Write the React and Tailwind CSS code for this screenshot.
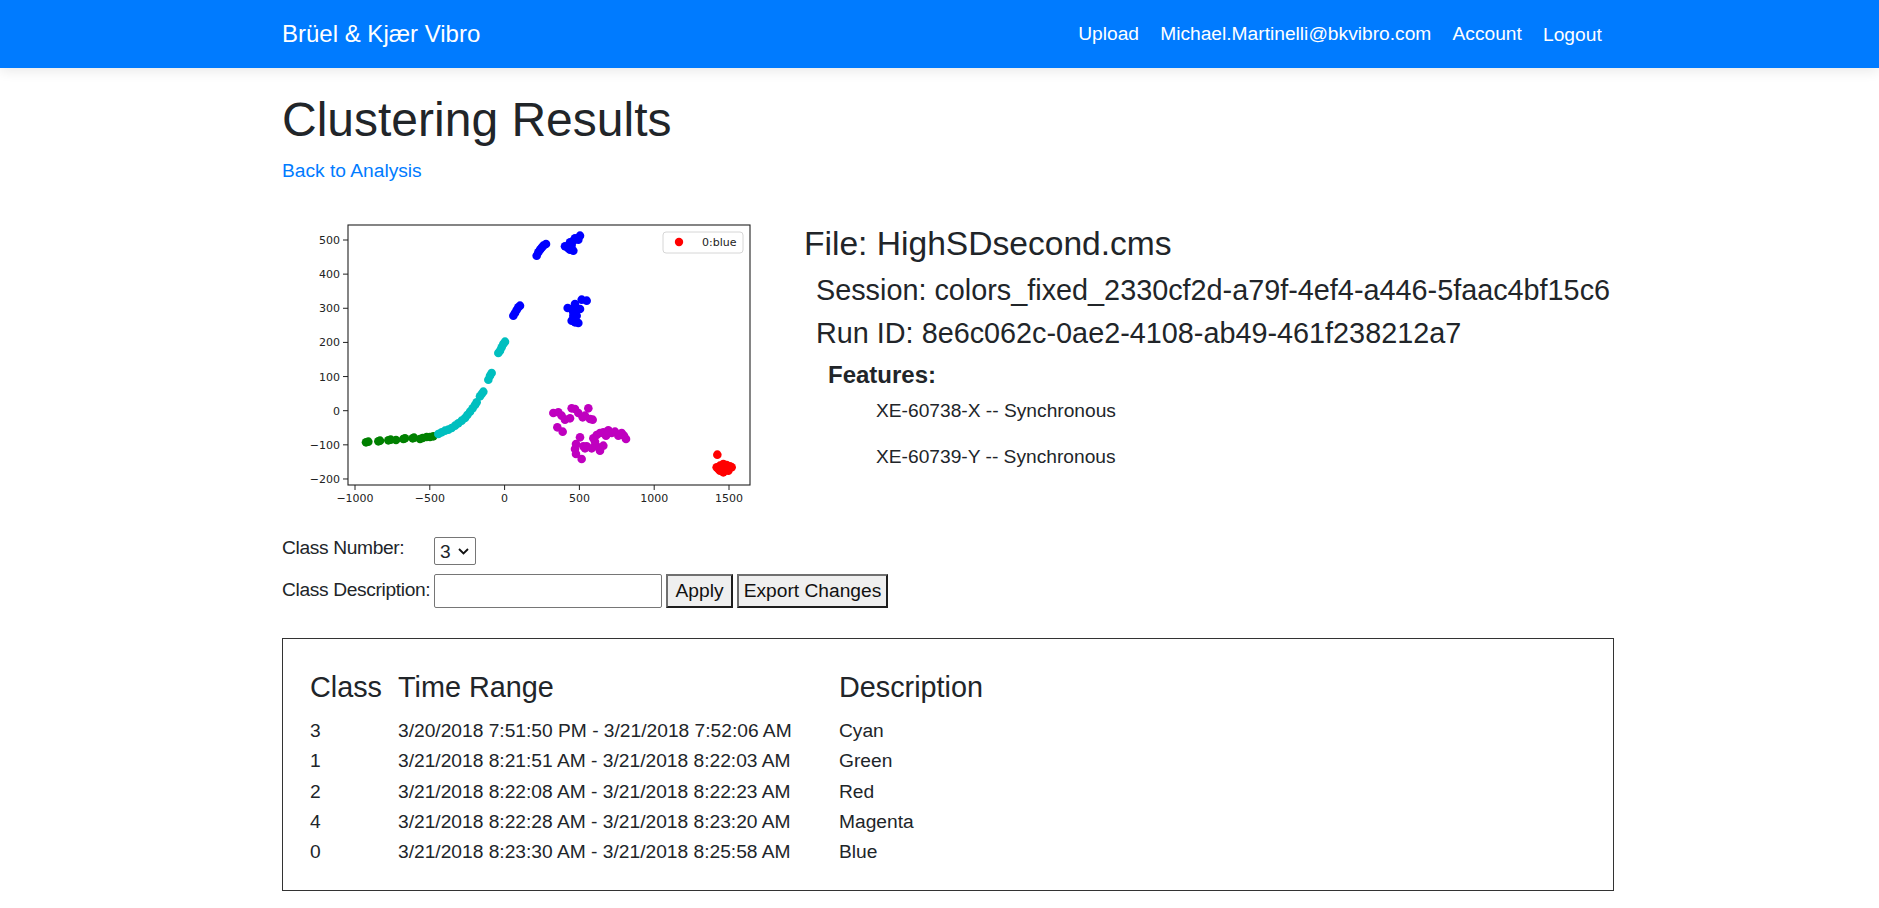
import React from "react";

const navLinks = ["Upload", "Michael.Martinelli@bkvibro.com", "Account", "Logout"];

const features = ["XE-60738-X -- Synchronous", "XE-60739-Y -- Synchronous"];

const rows = [
  ["3", "3/20/2018 7:51:50 PM - 3/21/2018 7:52:06 AM", "Cyan"],
  ["1", "3/21/2018 8:21:51 AM - 3/21/2018 8:22:03 AM", "Green"],
  ["2", "3/21/2018 8:22:08 AM - 3/21/2018 8:22:23 AM", "Red"],
  ["4", "3/21/2018 8:22:28 AM - 3/21/2018 8:23:20 AM", "Magenta"],
  ["0", "3/21/2018 8:23:30 AM - 3/21/2018 8:25:58 AM", "Blue"],
];

// scatter points, measured from the plot (3x zoom space)
const clusters = [
  {
    color: "#008000",
    pts: [
      [288, 700], [295, 698], [325, 697], [330, 695], [355, 694], [362, 692],
      [378, 693], [400, 690], [405, 688], [428, 688], [432, 686], [450, 690],
      [458, 687], [470, 684], [480, 684], [490, 682],
    ],
  },
  {
    color: "#00bfbf",
    pts: [
      [505, 675], [515, 670], [525, 665], [535, 662], [545, 657], [555, 650],
      [565, 643], [575, 635], [585, 627], [592, 618], [600, 608], [608, 598],
      [615, 588], [620, 580], [630, 562], [635, 555], [640, 548], [655, 512],
      [660, 500], [665, 492], [685, 432], [690, 425], [695, 415], [700, 405],
      [705, 398],
    ],
  },
  {
    color: "#0000ff",
    pts: [
      [730, 320], [735, 312], [740, 303], [745, 295], [750, 290],
      [800, 140], [805, 130], [810, 122], [815, 116], [820, 110], [828, 105],
      [885, 112], [895, 118], [900, 122], [905, 108], [910, 95], [915, 88],
      [925, 92], [930, 80], [910, 125], [900, 100],
      [893, 297], [905, 300], [910, 310], [915, 285], [920, 300], [930, 300],
      [935, 272], [950, 275], [905, 335], [915, 340], [925, 342], [910, 320],
      [920, 320],
    ],
  },
  {
    color: "#bf00bf",
    pts: [
      [850, 612], [865, 610], [875, 620], [885, 632], [900, 628], [905, 598],
      [915, 600], [925, 612], [938, 625], [945, 620], [955, 598], [960, 630],
      [968, 632], [862, 655], [878, 668], [930, 685], [918, 705], [915, 720],
      [918, 735], [935, 750], [945, 718], [950, 712], [975, 698], [980, 678],
      [990, 672], [1000, 670], [1008, 680], [1015, 664], [1025, 672], [1035, 668],
      [1045, 680], [1055, 672], [1062, 680], [1068, 690], [1000, 710], [990, 725],
      [985, 715], [965, 718], [970, 688], [940, 712],
    ],
  },
  {
    color: "#ff0000",
    pts: [
      [1342, 737], [1340, 775], [1350, 770], [1360, 765], [1370, 768], [1380, 772],
      [1375, 785], [1360, 790], [1350, 785], [1345, 780], [1365, 778], [1385, 775],
      [1355, 772],
    ],
  },
];

const yTicks = [500, 400, 300, 200, 100, 0, -100, -200];
const xTicks = [-1000, -500, 0, 500, 1000, 1500];
const label = (v) => (v < 0 ? "\u2212" + Math.abs(v) : String(v));

const ScatterPlot = () => (
  <svg width="520" height="346" viewBox="0 0 520 346" className="shrink-0 block">
    <g fontFamily="'DejaVu Sans', sans-serif" fontSize="11" fill="#222">
      {yTicks.map((v) => {
        const y = 55 + (500 - v) * 0.3414;
        return (
          <g key={v}>
            <line x1="61" x2="66" y1={y} y2={y} stroke="#222" strokeWidth="1" />
            <text x="58" y={y + 4} textAnchor="end">{label(v)}</text>
          </g>
        );
      })}
      {xTicks.map((v) => {
        const x = 73 + (v + 1000) * 0.1496;
        return (
          <g key={v}>
            <line x1={x} x2={x} y1="300" y2="305" stroke="#222" strokeWidth="1" />
            <text x={x} y="317" textAnchor="middle">{label(v)}</text>
          </g>
        );
      })}
    </g>
    <rect x="66" y="40" width="402" height="260" fill="none" stroke="#222" strokeWidth="1.1" />
    {clusters.map((c) => (
      <g key={c.color} fill={c.color}>
        {c.pts.map(([zx, zy], i) => (
          <circle key={i} cx={zx / 3 - 12} cy={zy / 3 + 24} r="4.3" />
        ))}
      </g>
    ))}
    <rect x="381" y="47" width="80" height="21" rx="3" fill="#fff" fillOpacity="0.85" stroke="#d6d6d6" />
    <circle cx="397" cy="57" r="4.2" fill="#ff0000" />
    <text x="420" y="61" fontFamily="'DejaVu Sans', sans-serif" fontSize="11" fill="#222">0:blue</text>
  </svg>
);

const App = () => {
  return (
    <div className="min-h-screen bg-white text-[#212529] font-['Liberation_Sans',Arial,sans-serif] text-[19.2px] leading-[1.5]">
      {/* Navbar */}
      <nav className="bg-[#007bff] h-[68px] shadow-[0_3px_12px_rgba(0,0,0,0.09)]">
        <div className="ml-[282px] w-[1332px] h-full flex items-center justify-between">
          <a className="text-white text-[24px] leading-[1.5]">Brüel &amp; Kjær Vibro</a>
          <ul className="flex items-center mr-[1.7px]">
            {navLinks.map((link) => (
              <li key={link}>
                <a className={`block px-[10.6px] text-white ${link === "Logout" ? "pt-[3px]" : ""}`}>
                  {link}
                </a>
              </li>
            ))}
          </ul>
        </div>
      </nav>

      <div className="ml-[282px] w-[1332px]">
        <h1 className="mt-[23px] mb-[8px] text-[48px] leading-[1.2] font-medium">Clustering Results</h1>
        <a className="text-[#007bff]">Back to Analysis</a>

        {/* Plot + run info */}
        <div className="flex">
          <ScatterPlot />
          <div className="mt-[39px] ml-[2px]">
            <h3 className="text-[33.6px] leading-[1.2] mb-[8px] font-medium">File: HighSDsecond.cms</h3>
            <div className="pl-[12px]">
              <h4 className="text-[28.8px] leading-[1.2] mb-[9px] font-medium">
                Session: colors_fixed_2330cf2d-a79f-4ef4-a446-5faac4bf15c6
              </h4>
              <h4 className="text-[28.8px] leading-[1.2] mb-[10px] font-medium">
                Run ID: 8e6c062c-0ae2-4108-ab49-461f238212a7
              </h4>
              <div className="pl-[12px]">
                <h5 className="text-[24px] leading-[1.2] mb-[7px] font-bold">Features:</h5>
                <div className="pl-[48px]">
                  {features.map((f) => (
                    <p key={f} className="mb-[18px]">{f}</p>
                  ))}
                </div>
              </div>
            </div>
          </div>
        </div>

        {/* Class form */}
        <div className="grid grid-cols-[152px_auto] gap-y-[8px] items-start">
          <label className="pt-[3px] tracking-[-0.35px] whitespace-nowrap">Class Number:</label>
          <div className="relative mt-[6px] w-[42px] h-[28px]">
            <select
              defaultValue="3"
              className="appearance-none w-full h-full border border-[#767676] rounded-[2px] bg-white pl-[5px] pr-[18px] text-[19.2px] leading-none outline-none"
            >
              {[0, 1, 2, 3, 4].map((n) => (
                <option key={n} value={n}>{n}</option>
              ))}
            </select>
            <svg className="absolute left-[24px] top-[11px] pointer-events-none" width="11" height="7" viewBox="0 0 11 7">
              <path d="M1 1l4.5 4.5L10 1" fill="none" stroke="#111" strokeWidth="1.8" />
            </svg>
          </div>

          <label className="pt-[3px] tracking-[-0.35px] whitespace-nowrap">Class Description:</label>
          <div className="flex items-center gap-[4px] mt-[1px]">
            <input
              type="text"
              className="w-[228px] h-[34px] border border-[#767676] rounded-[2px] px-[4px] outline-none"
            />
            <button className="w-[67px] h-[34px] bg-[#efefef] border-2 border-t-[#707070] border-l-[#707070] border-r-[#1e1e1e] border-b-[#1e1e1e] text-[#111]">
              Apply
            </button>
            <button className="w-[151px] h-[34px] bg-[#efefef] border-2 border-t-[#707070] border-l-[#707070] border-r-[#1e1e1e] border-b-[#1e1e1e] text-[#111]">
              Export Changes
            </button>
          </div>
        </div>

        {/* Results table */}
        <div className="mt-[30px] border border-[#333] pl-[27px] pt-[31px] pb-[23px]">
          <div className="grid grid-cols-[88px_441px_auto] text-[28.8px] leading-[1.2] font-medium h-[34.56px]">
            <div>Class</div>
            <div>Time Range</div>
            <div>Description</div>
          </div>
          <div className="mt-[11px]">
            {rows.map((r) => (
              <div key={r[0]} className="grid grid-cols-[88px_441px_auto] h-[30.3px] leading-[30.3px]">
                <div>{r[0]}</div>
                <div>{r[1]}</div>
                <div>{r[2]}</div>
              </div>
            ))}
          </div>
        </div>
      </div>
    </div>
  );
};

export default App;
